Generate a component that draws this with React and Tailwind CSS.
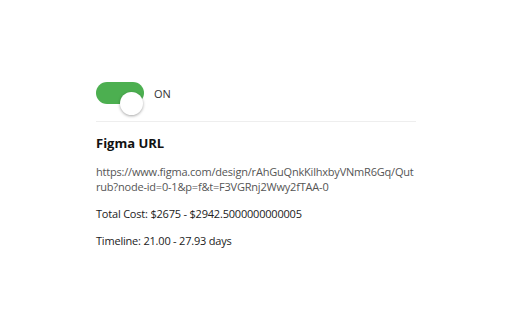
export default function App() {
  return (
    <div className="w-[512px] h-[320px] bg-white flex justify-center" style={{ fontFamily: '"Open Sans", sans-serif' }}>
      <div className="w-[320px] pt-[82px]">
        <div className="flex items-center gap-[10px] pb-[17px] border-b border-[#eeeeee]">
          <div className="relative w-[48px] h-[22px] rounded-full bg-[#4caf50]">
            <div className="absolute left-[24px] top-[10px] w-[23px] h-[23px] rounded-full bg-white shadow-[0_1px_3px_rgba(0,0,0,0.35)]" />
          </div>
          <span className="text-[11px] text-[#333] mt-[3px]">ON</span>
        </div>
        <h2 className="mt-[12px] text-[13px] font-bold text-[#111]">Figma URL</h2>
        <p className="mt-[10px] text-[11px] leading-[15px] tracking-[-0.2px] text-[#555] break-all">
          https://www.figma.com/design/rAhGuQnkKilhxbyVNmR6Gq/Qutrub?node-id=0-1&amp;p=f&amp;t=F3VGRnj2Wwy2fTAA-0
        </p>
        <p className="mt-[12px] text-[11px] leading-[15px] tracking-[-0.2px] text-[#222]">Total Cost: $2675 - $2942.5000000000005</p>
        <p className="mt-[12px] text-[11px] leading-[15px] tracking-[-0.2px] text-[#222]">Timeline: 21.00 - 27.93 days</p>
      </div>
    </div>
  )
}
